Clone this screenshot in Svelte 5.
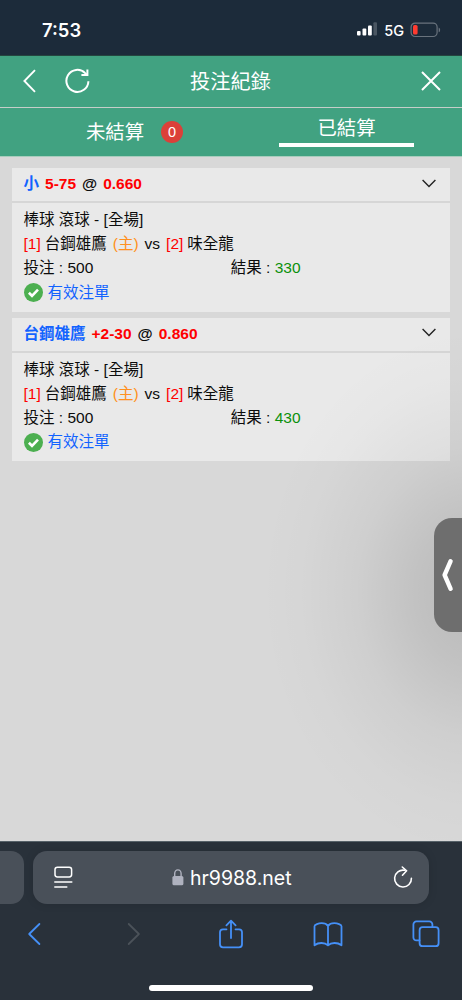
<script lang="ts">
    type Bet = {
        pick: string;
        line: string;
        odds: string;
        stake: number;
        result: number;
    };

    let tab = 'settled';

    const bets: Bet[] = [
        { pick: '小', line: '5-75', odds: '0.660', stake: 500, result: 330 },
        { pick: '台鋼雄鷹', line: '+2-30', odds: '0.860', stake: 500, result: 430 },
    ];
</script>

<div class="phone">
    <div class="status">
        <span class="status__time">7:53</span>
        <svg class="status__signal" width="20" height="14" viewBox="0 0 20 14" fill="#fff">
            <rect x="0" y="9" width="3.6" height="4.6" rx="1" />
            <rect x="5.5" y="6.4" width="3.8" height="7.2" rx="1" />
            <rect x="11" y="3.4" width="3.8" height="10.2" rx="1" />
            <rect x="16.4" y="0.2" width="3.6" height="13.4" rx="1" fill="#4a5662" />
        </svg>
        <span class="status__net">5G</span>
        <svg width="31" height="16" viewBox="0 0 31 16">
            <rect x="1.1" y="1.1" width="26" height="13.4" rx="4" fill="none" stroke="#69737d" stroke-width="1.2" />
            <rect x="3" y="3" width="4.6" height="9.6" rx="1.6" fill="#ff3b30" />
            <path d="M28.7 5.4c1.9.7 1.9 4.2 0 4.9z" fill="#69737d" />
        </svg>
    </div>

    <header class="header">
        <svg class="header__back" width="14" height="24" viewBox="0 0 14 24" fill="none" stroke="#fff" stroke-width="1.9">
            <path d="M12 1.2 1.4 12 12 22.8" />
        </svg>
        <svg class="header__reload" width="26" height="26" viewBox="0 0 26 26" fill="none" stroke="#fff" stroke-width="2">
            <path d="M23.4 13.2A11 11 0 1 1 20.2 5.1l2.1 2" />
            <path d="M22.4 1.4v5.7h-6" />
        </svg>
        <h1 class="header__title">投注紀錄</h1>
        <svg class="header__close" width="20" height="20" viewBox="0 0 20 20" stroke="#fff" stroke-width="2">
            <path d="M1 1l18 18M19 1 1 19" />
        </svg>
    </header>

    <nav class="tabs">
        <button class="tab" on:click={() => (tab = 'open')}>
            <span class="tab__label" class:active={tab === 'open'}>未結算</span>
            <span class="tab__badge">0</span>
        </button>
        <button class="tab" on:click={() => (tab = 'settled')}>
            <span class="tab__label" class:active={tab === 'settled'}>已結算</span>
        </button>
    </nav>

    <main class="list">
        {#each bets as bet}
            <section class="bet">
                <div class="bet__head">
                    <span class="blue">{bet.pick}</span>
                    <span class="red">{bet.line}</span>
                    <span>@</span>
                    <span class="red">{bet.odds}</span>
                    <svg class="bet__toggle" width="14" height="9" viewBox="0 0 14 9" fill="none" stroke="#222" stroke-width="1.4">
                        <path d="M.6 1 7 7.4 13.4 1" />
                    </svg>
                </div>
                <div class="bet__body">
                    <p class="row">棒球 滾球 - [全場]</p>
                    <p class="row match">
                        <span class="red">[1]</span>
                        <span class="match__team">台鋼雄鷹</span>
                        <span class="orange">(主)</span>
                        <span>vs</span>
                        <span class="red">[2]</span>
                        <span class="match__team">味全龍</span>
                    </p>
                    <p class="row money">
                        <span>投注 : {bet.stake}</span>
                        <span>結果 : <span class="green">{bet.result}</span></span>
                    </p>
                    <p class="row valid">
                        <svg width="19" height="19" viewBox="0 0 19 19">
                            <circle cx="9.5" cy="9.5" r="9.5" fill="#4caf50" />
                            <path d="M4.9 9.8 8 12.8l6-6.1" fill="none" stroke="#fff" stroke-width="2.6" />
                        </svg>
                        <span class="blue">有效注單</span>
                    </p>
                </div>
            </section>
        {/each}
        <div class="drawer">
            <svg width="12" height="34" viewBox="0 0 12 34" fill="none" stroke="#fff" stroke-width="4.4" stroke-linecap="round" stroke-linejoin="round">
                <path d="M8.6 3.2 2.6 17l6 13.8" />
            </svg>
        </div>
    </main>

    <footer class="safari">
        <div class="safari__tabs">
            <div class="safari__prev"></div>
            <div class="address">
                <svg width="19" height="23" viewBox="0 0 19 23" fill="none" stroke="#fff" stroke-width="1.5" stroke-linecap="round">
                    <rect x="1" y="1.2" width="16.6" height="9.8" rx="2.4" />
                    <path d="M.8 16h17M.8 21h12" />
                </svg>
                <span class="address__url">
                    <svg width="12" height="17" viewBox="0 0 12 17">
                        <path d="M2.7 8V4.6a3.2 3.7 0 0 1 6.4 0V8" fill="none" stroke="#afb2bf" stroke-width="1.4" />
                        <rect x=".4" y="7" width="11" height="9.3" rx="1.6" fill="#afb2bf" />
                    </svg>
                    hr9988.net
                </span>
                <svg width="20" height="24" viewBox="0 0 20 24" fill="none" stroke="#fff" stroke-width="1.6" stroke-linecap="round" stroke-linejoin="round">
                    <path d="M11.4 4.3A8.4 8.4 0 1 0 18.4 12.2" />
                    <path d="M9.3 1 13.6 4.8l-4.1 4.4" />
                </svg>
            </div>
        </div>
        <div class="toolbar">
            <svg width="30" height="24" viewBox="0 0 14 24" stroke="#4590f7">
                <path d="M12.4 2 2.2 12l10.2 10" />
            </svg>
            <svg class="toolbar__next" width="30" height="24" viewBox="0 0 14 24" stroke="#4b5259">
                <path d="M1.7 2 11.9 12 1.7 22" />
            </svg>
            <svg class="toolbar__share" width="30" height="30" viewBox="0 0 26 30" stroke="#4590f7">
                <path d="M8.5 10.3H5a3 3 0 0 0-3 3v12a3 3 0 0 0 3 3h16a3 3 0 0 0 3-3v-12a3 3 0 0 0-3-3h-3.5M13 19V1.8M8.4 6.3 13 1.7l4.6 4.6" />
            </svg>
            <svg width="30" height="25" viewBox="0 0 30 25" stroke="#4590f7">
                <path d="M15 4.1C13.8 2.2 11.4 1.2 8.7 1.2 5.6 1.2 1.5 2.4 1.5 4.3v19c2-1.5 4.6-2.3 7-2.3 2.7 0 5 .8 6.5 2.3 1.5-1.5 3.8-2.3 6.5-2.3 2.4 0 5 .8 7 2.3v-19c0-1.9-4.1-3.1-7.2-3.1-2.7 0-5.1 1-6.3 2.9zM15 4.1v19" />
            </svg>
            <svg width="30" height="28" viewBox="0 0 28 28" stroke="#4590f7">
                <path d="M7.5 20.4H4.4a3 3 0 0 1-3-3V4.4a3 3 0 0 1 3-3h13a3 3 0 0 1 3 3v2.8" />
                <rect x="7.6" y="7.2" width="19" height="19" rx="3" />
            </svg>
        </div>
        <div class="home"></div>
    </footer>
</div>

<style>
    :global(body) {
        background: #d8d8d8;
    }

    .phone {
        width: 462px;
        height: 1000px;
        display: flex;
        flex-direction: column;
        overflow: hidden;
        font-family: "Liberation Sans", "Noto Sans CJK TC", sans-serif;
        color: #0c0c0c;
    }

    svg {
        display: block;
        flex: none;
    }

    .status {
        height: 49px;
        padding: 6px 21px 0 42px;
        display: flex;
        align-items: center;
        background: #1c2b3a;
        border-bottom: 1px solid #24463f;
        color: #fff;
    }

    .status__time {
        font-family: Inter, sans-serif;
        font-size: 18.4px;
        font-weight: 600;
        line-height: 20px;
        margin-top: -1px;
    }

    .status__signal {
        margin: -3px 0 0 auto;
    }

    .status__net {
        margin: -1px 6px 0 7px;
        font-family: Inter, sans-serif;
        font-size: 14.5px;
        font-weight: 500;
    }

    .status__net + svg {
        margin-top: -2px;
    }

    .header {
        height: 52px;
        box-sizing: border-box;
        padding: 0 21px 1px 23px;
        display: grid;
        grid-template-columns: 14px 28px 1fr 20px;
        column-gap: 28px;
        align-items: center;
        background: #41a281;
        border-bottom: 1px solid #c6cec9;
    }

    .header__title {
        margin: 0 53px 1px 0;
        font-size: 20.2px;
        font-weight: 400;
        text-align: center;
        white-space: nowrap;
        color: #fff;
    }

    .tabs {
        height: 49px;
        box-sizing: border-box;
        padding-top: 1px;
        display: grid;
        grid-template-columns: 1fr 1fr;
        background: #41a281;
        border-bottom: 1px solid #a8cdbd;
    }

    .tab {
        display: flex;
        justify-content: center;
        align-items: center;
        gap: 17px;
        padding: 0 0 1px 38px;
        border: none;
        background: none;
        font-family: inherit;
    }

    .tab + .tab {
        padding: 5px 0 0;
        align-items: flex-start;
    }

    .tab__label {
        font-size: 19.4px;
        line-height: 36px;
        color: #fff;
    }

    .active {
        width: 135px;
        border-bottom: 4px solid #fff;
        line-height: 29px;
    }

    .tab__badge {
        width: 22px;
        height: 22px;
        border-radius: 50%;
        background: #db4039;
        color: #fff;
        font-size: 14.5px;
        line-height: 22px;
        text-align: center;
    }

    .list {
        flex: 1;
        position: relative;
        display: flex;
        flex-direction: column;
        gap: 6px;
        padding: 11px 12px 0;
        background: #d8d8d8;
    }

    /* soft shade the pull-out handle throws over the page */
    .list::after {
        content: "";
        position: absolute;
        inset: 0;
        background: radial-gradient(215px 265px at 475px 435px, rgba(0, 0, 0, 0.15), rgba(0, 0, 0, 0.1) 28%, rgba(0, 0, 0, 0.045) 55%, rgba(0, 0, 0, 0.012) 80%, transparent);
        pointer-events: none;
    }

    .bet__head {
        height: 33px;
        display: flex;
        align-items: baseline;
        gap: 6px;
        padding: 0 14px 0 11.5px;
        background: #e9e9e9;
        border-bottom: 2px solid #d6d6d6;
        font-size: 15.5px;
        font-weight: 700;
        line-height: 32px;
    }

    .bet__toggle {
        align-self: center;
        margin: 0 0 3px auto;
    }

    .bet__body {
        height: 108.5px;
        box-sizing: border-box;
        padding: 5px 12px 0 11.5px;
        background: #e9e9e9;
        font-size: 15.5px;
    }

    .row {
        height: 24px;
        margin: 0;
        line-height: 24px;
        white-space: nowrap;
    }

    .match,
    .valid {
        display: flex;
        align-items: center;
        gap: 6px;
    }

    .match__team {
        margin-left: -2px;
    }

    .money {
        display: grid;
        grid-template-columns: 1fr 1fr;
    }

    .valid {
        height: 25px;
        gap: 5px;
    }

    .blue {
        color: #1263ff;
    }

    .red {
        color: #ff0000;
    }

    .orange {
        color: #ff9020;
    }

    .green {
        color: #0b900b;
    }

    .drawer {
        position: absolute;
        z-index: 1;
        right: 0;
        top: 361px;
        width: 28px;
        height: 114px;
        display: flex;
        align-items: center;
        justify-content: center;
        border-radius: 18px 0 0 18px;
        background: #6e6e6e;
    }

    .safari {
        height: 159px;
        box-sizing: border-box;
        display: flex;
        flex-direction: column;
        align-items: center;
        padding-top: 9px;
        background: #29313a;
        border-top: 1px solid #566168;
    }

    .safari__tabs {
        align-self: stretch;
        display: flex;
        gap: 9px;
    }

    .safari__prev {
        width: 24px;
        border-radius: 0 13px 13px 0;
        background: #495059;
    }

    .address {
        width: 396px;
        height: 53px;
        box-sizing: border-box;
        display: flex;
        align-items: center;
        justify-content: space-between;
        padding: 0 16px 0 20.5px;
        border-radius: 14px;
        background: #495059;
        box-shadow: 0 0 10px rgba(0, 0, 0, 0.12);
    }

    .address__url {
        display: flex;
        align-items: center;
        gap: 6px;
        margin-right: 2px;
        font-family: Inter, sans-serif;
        font-size: 19.5px;
        color: #fff;
    }

    .toolbar {
        align-self: stretch;
        height: 60px;
        box-sizing: border-box;
        display: flex;
        align-items: center;
        justify-content: space-between;
        padding: 0 21px 0 19px;
    }

    .toolbar svg {
        fill: none;
        stroke-width: 1.8;
        stroke-linecap: round;
        stroke-linejoin: round;
    }

    .toolbar .toolbar__next {
        margin: 0 -2px 0 2px;
    }

    .toolbar .toolbar__share {
        margin: 0 -1px 1px 1px;
    }

    .home {
        width: 164px;
        height: 6px;
        margin-top: 20.5px;
        border-radius: 3px;
        background: #fff;
    }
</style>
